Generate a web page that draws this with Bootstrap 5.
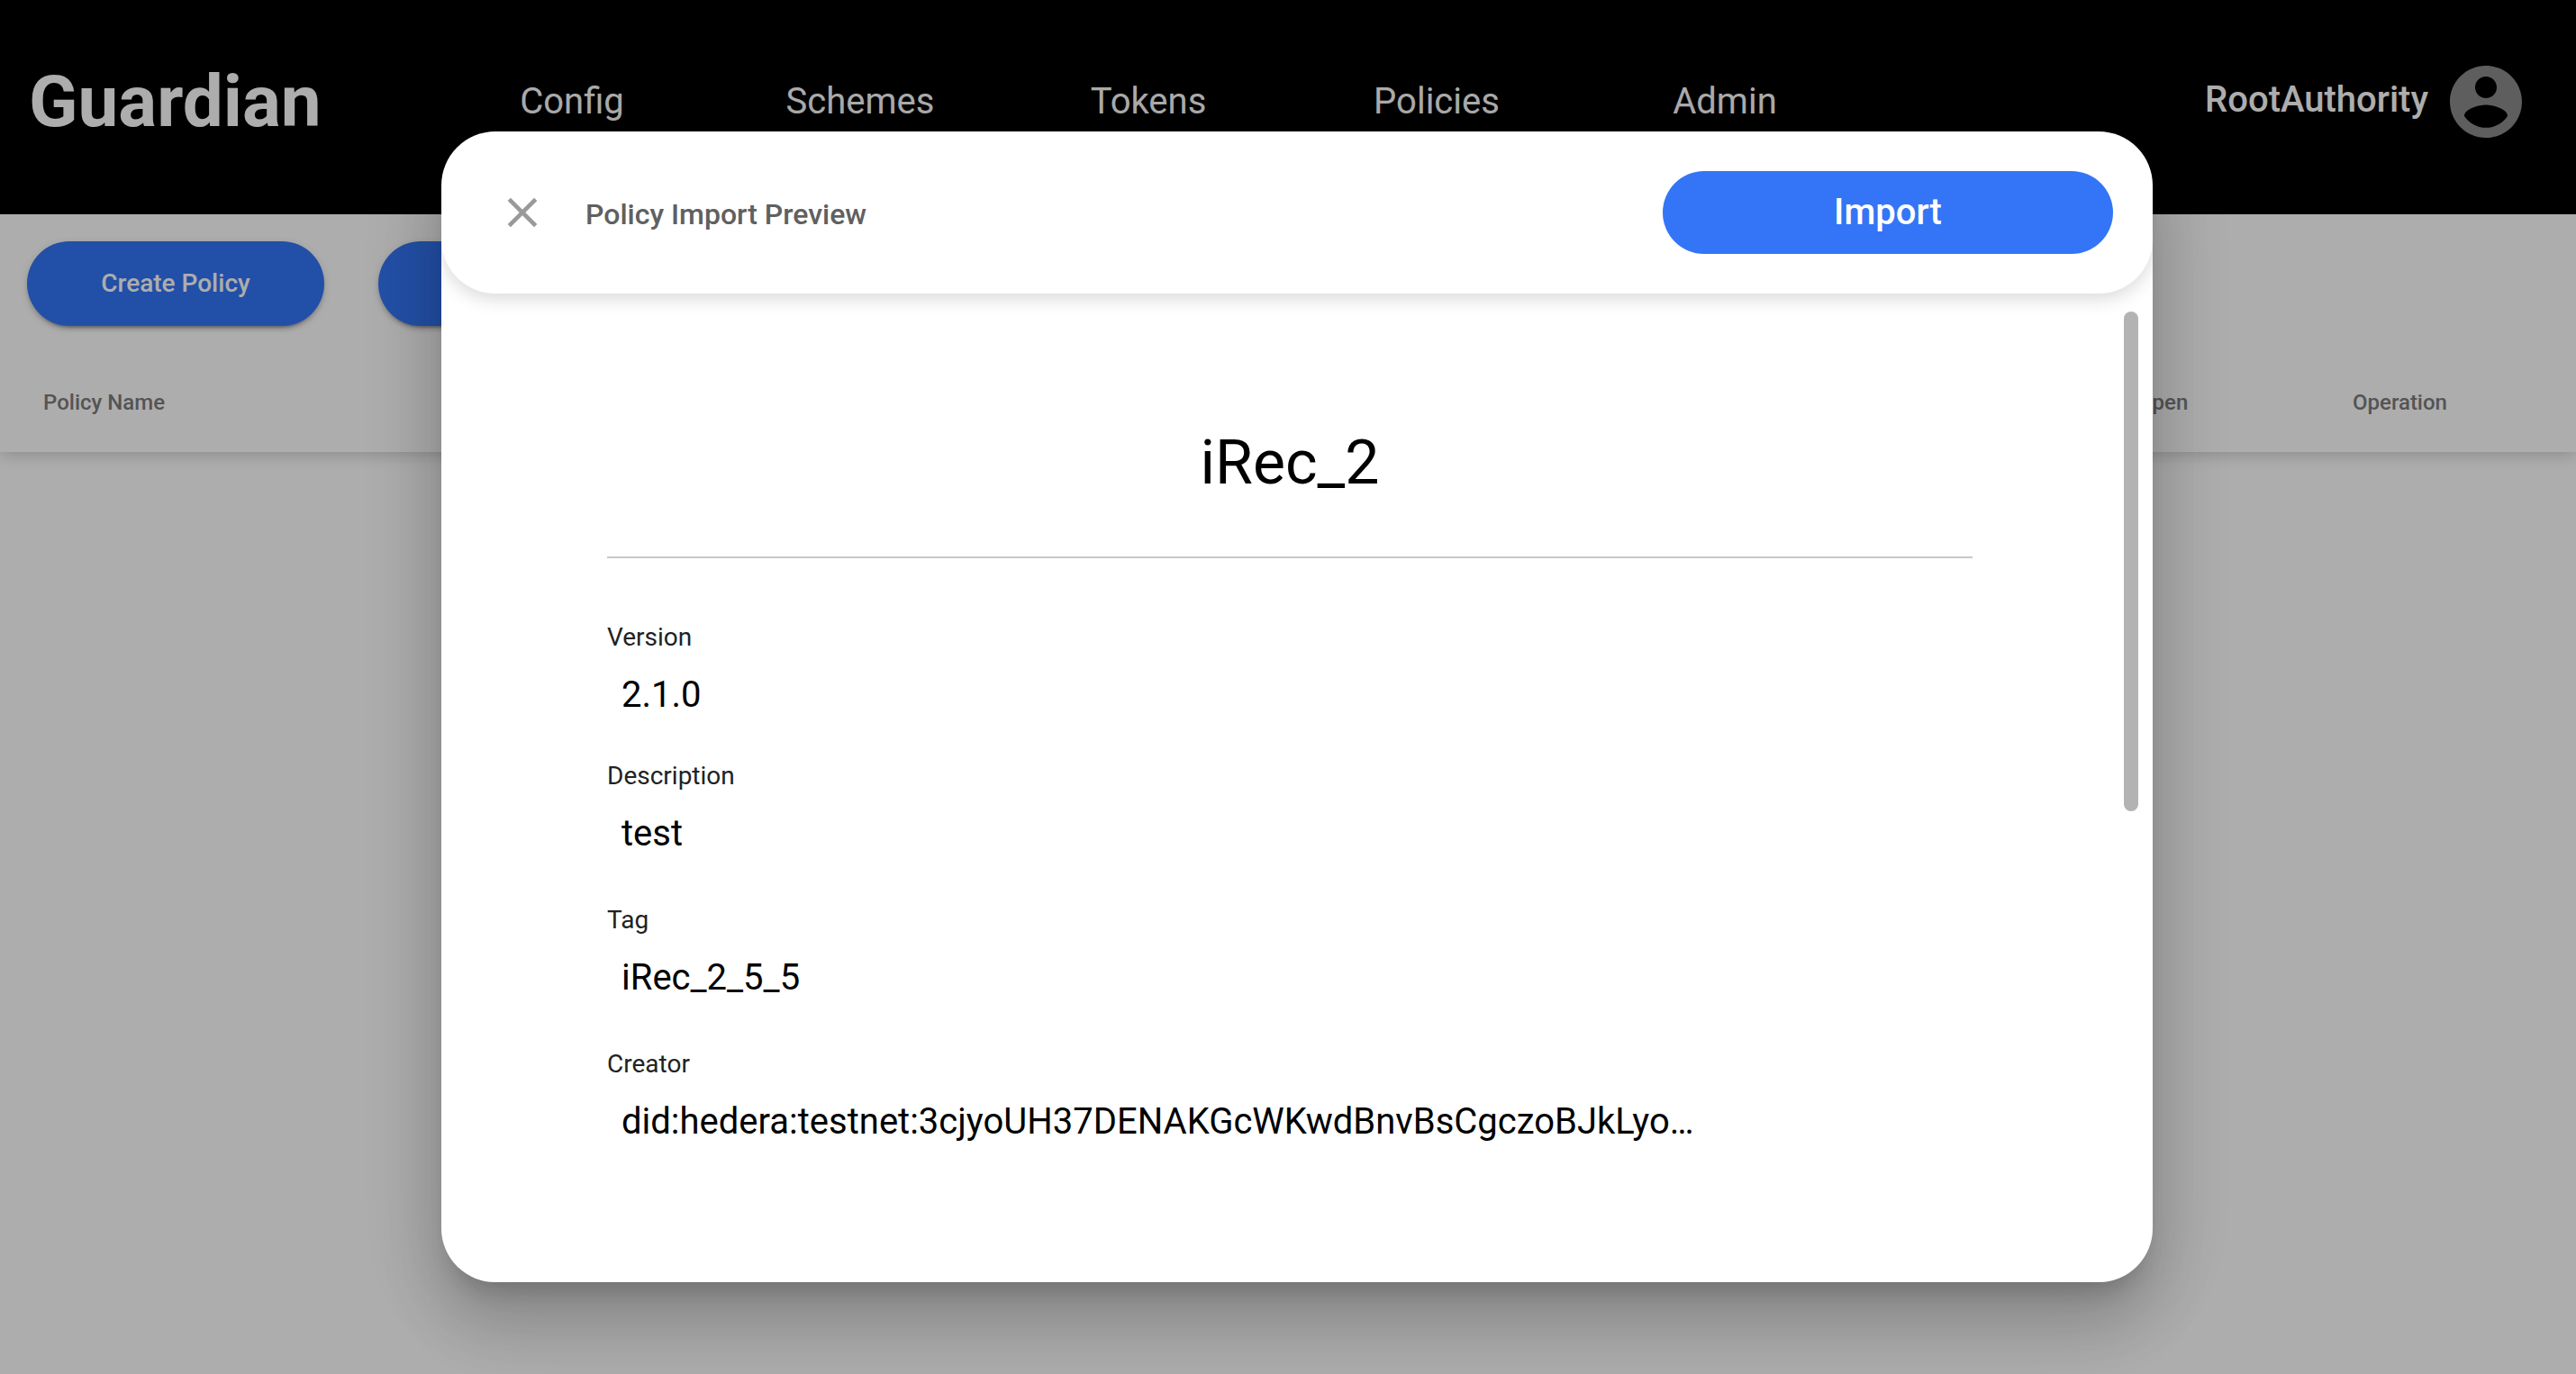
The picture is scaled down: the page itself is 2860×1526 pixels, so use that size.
<!DOCTYPE html>
<html lang="en">
<head>
<meta charset="utf-8">
<meta name="viewport" content="width=device-width, initial-scale=1">
<title>Guardian - Policies</title>
<link href="https://cdn.jsdelivr.net/npm/bootstrap@5.3.0/dist/css/bootstrap.min.css" rel="stylesheet">
<style>
  body { font-family: Roboto, "Liberation Sans", sans-serif; background: #fff; color: #000; }
  .page { height: 100vh; overflow: hidden; }
  .topbar { background: #000; height: 238px; padding: 0 52px 12px 32px; }
  .brand { font-size: 80px; line-height: 96px; font-weight: 700; color: #fff; width: 443px; }
  .brand:hover { color: #fff; }
  .tabs .nav-link { width: 320px; padding: 0; text-align: center; font-size: 40px; line-height: 48px; color: #fff; }
  .account { font-size: 40px; line-height: 48px; font-weight: 500; color: #fff; }
  .account span { padding-bottom: 4px; }
  .account svg { width: 96px; height: 96px; fill: #8b8b8b; }
  .actions { padding: 30px; gap: 60px; }
  .btn-pill { --bs-btn-color: #fff; --bs-btn-bg: #3375f6; --bs-btn-border-color: #3375f6; --bs-btn-border-width: 0; --bs-btn-padding-y: 0; font-weight: 500; border-radius: 48px; }
  .btn-action { width: 330px; height: 94px; font-size: 28px; box-shadow: 0 6px 2px -4px rgba(0,0,0,.2), 0 4px 4px rgba(0,0,0,.14), 0 2px 10px rgba(0,0,0,.12); }
  .grid-table { box-shadow: 0 4px 16px rgba(0,0,0,.18); clip-path: inset(0 0 -40px 0); height: 110px; table-layout: fixed; }
  .grid-table th { background: #fff; color: #7c7c7c; font-size: 24px; line-height: 32px; font-weight: 500; padding: 0 0 0 48px; vertical-align: middle; border: 0; }
  .grid-table .col-open { width: 239px; }
  .grid-table .col-op { width: 296px; }
  .shade { position: fixed; inset: 0; background: rgba(0,0,0,.32); padding: 146px 0 102px 20px; }
  .sheet { width: 1900px; max-width: 100%; background: #fff; border-radius: 60px; overflow: hidden; }
  .sheet-shadow { border-radius: 60px; max-width: 100%; box-shadow: 0 22px 30px -14px rgba(0,0,0,.2), 0 48px 76px 6px rgba(0,0,0,.14), 0 18px 92px 16px rgba(0,0,0,.12); }
  .sheet-head { padding: 44px 44px 44px 62px; border-radius: 60px; box-shadow: 0 6px 20px rgba(0,0,0,.15); }
  .close-x { width: 56px; height: 56px; line-height: 0; }
  .close-x svg { width: 56px; height: 56px; fill: #999; }
  .sheet-title { font-size: 32px; line-height: 40px; font-weight: 500; color: #606060; margin: 0 0 0 42px; padding-top: 4px; }
  .btn-import { width: 500px; height: 92px; font-size: 40px; }
  .sheet-body { padding: 140px 200px 0 184px; }
  .policy-name { font-size: 68px; line-height: 96px; font-weight: 400; padding-bottom: 56px; border-bottom: 2px solid #c8c8c8; margin-bottom: 70px; }
  .field dt { font-size: 28px; line-height: 36px; font-weight: 400; color: #222; }
  .field dd { font-size: 40px; line-height: 48px; padding-left: 16px; margin: 22px 0 54px; }
  .field:first-child dd { margin-bottom: 48px; }
  .thumb { position: absolute; right: 16px; top: 200px; width: 16px; height: 555px; border-radius: 8px; background: #b3b3b3; }
</style>
</head>
<body>
<div class="page">
  <header class="topbar navbar flex-nowrap">
    <a class="brand text-decoration-none flex-shrink-0" href="#">Guardian</a>
    <nav class="tabs nav flex-nowrap me-auto">
      <a class="nav-link" href="#">Config</a>
      <a class="nav-link" href="#">Schemes</a>
      <a class="nav-link" href="#">Tokens</a>
      <a class="nav-link" href="#">Policies</a>
      <a class="nav-link" href="#">Admin</a>
    </nav>
    <div class="account d-flex align-items-center gap-3">
      <span>RootAuthority</span>
      <svg viewBox="0 0 24 24" aria-hidden="true"><path d="M12 2C6.480 2 2 6.480 2 12s4.480 10 10 10 10-4.480 10-10S17.520 2 12 2zm0 3c1.660 0 3 1.340 3 3s-1.340 3-3 3-3-1.340-3-3 1.340-3 3-3zm0 14.200c-2.500 0-4.710-1.280-6-3.220.030-1.990 4-3.080 6-3.080 1.990 0 5.970 1.090 6 3.080-1.290 1.940-3.500 3.220-6 3.220z"/></svg>
    </div>
  </header>
  <main>
    <div class="actions d-flex">
      <button type="button" class="btn btn-pill btn-action">Create Policy</button>
      <button type="button" class="btn btn-pill btn-action">Import</button>
    </div>
    <table class="grid-table w-100">
      <thead>
        <tr><th scope="col">Policy Name</th><th scope="col" class="col-open">Open</th><th scope="col" class="col-op">Operation</th></tr>
      </thead>
    </table>
  </main>
</div>

<div class="shade d-flex justify-content-center">
  <div class="sheet-shadow d-flex">
    <section class="sheet position-relative" role="dialog" aria-modal="true" aria-labelledby="sheet-title">
      <header class="sheet-head d-flex align-items-center">
        <button type="button" class="close-x btn p-0 border-0" aria-label="Close">
          <svg viewBox="0 0 24 24" aria-hidden="true"><path d="M19 6.410L17.590 5 12 10.590 6.410 5 5 6.410 10.590 12 5 17.590 6.410 19 12 13.410 17.590 19 19 17.590 13.410 12z"/></svg>
        </button>
        <h2 id="sheet-title" class="sheet-title me-auto">Policy Import Preview</h2>
        <button type="button" class="btn btn-pill btn-import">Import</button>
      </header>
      <div class="sheet-body">
        <h1 class="policy-name text-center">iRec_2</h1>
        <dl class="m-0">
          <div class="field"><dt>Version</dt><dd>2.1.0</dd></div>
          <div class="field"><dt>Description</dt><dd>test</dd></div>
          <div class="field"><dt>Tag</dt><dd>iRec_2_5_5</dd></div>
          <div class="field"><dt>Creator</dt><dd>did:hedera:testnet:3cjyoUH37DENAKGcWKwdBnvBsCgczoBJkLyo…</dd></div>
        </dl>
      </div>
      <div class="thumb"></div>
    </section>
  </div>
</div>
<script src="https://cdn.jsdelivr.net/npm/bootstrap@5.3.0/dist/js/bootstrap.bundle.min.js"></script>
</body>
</html>
